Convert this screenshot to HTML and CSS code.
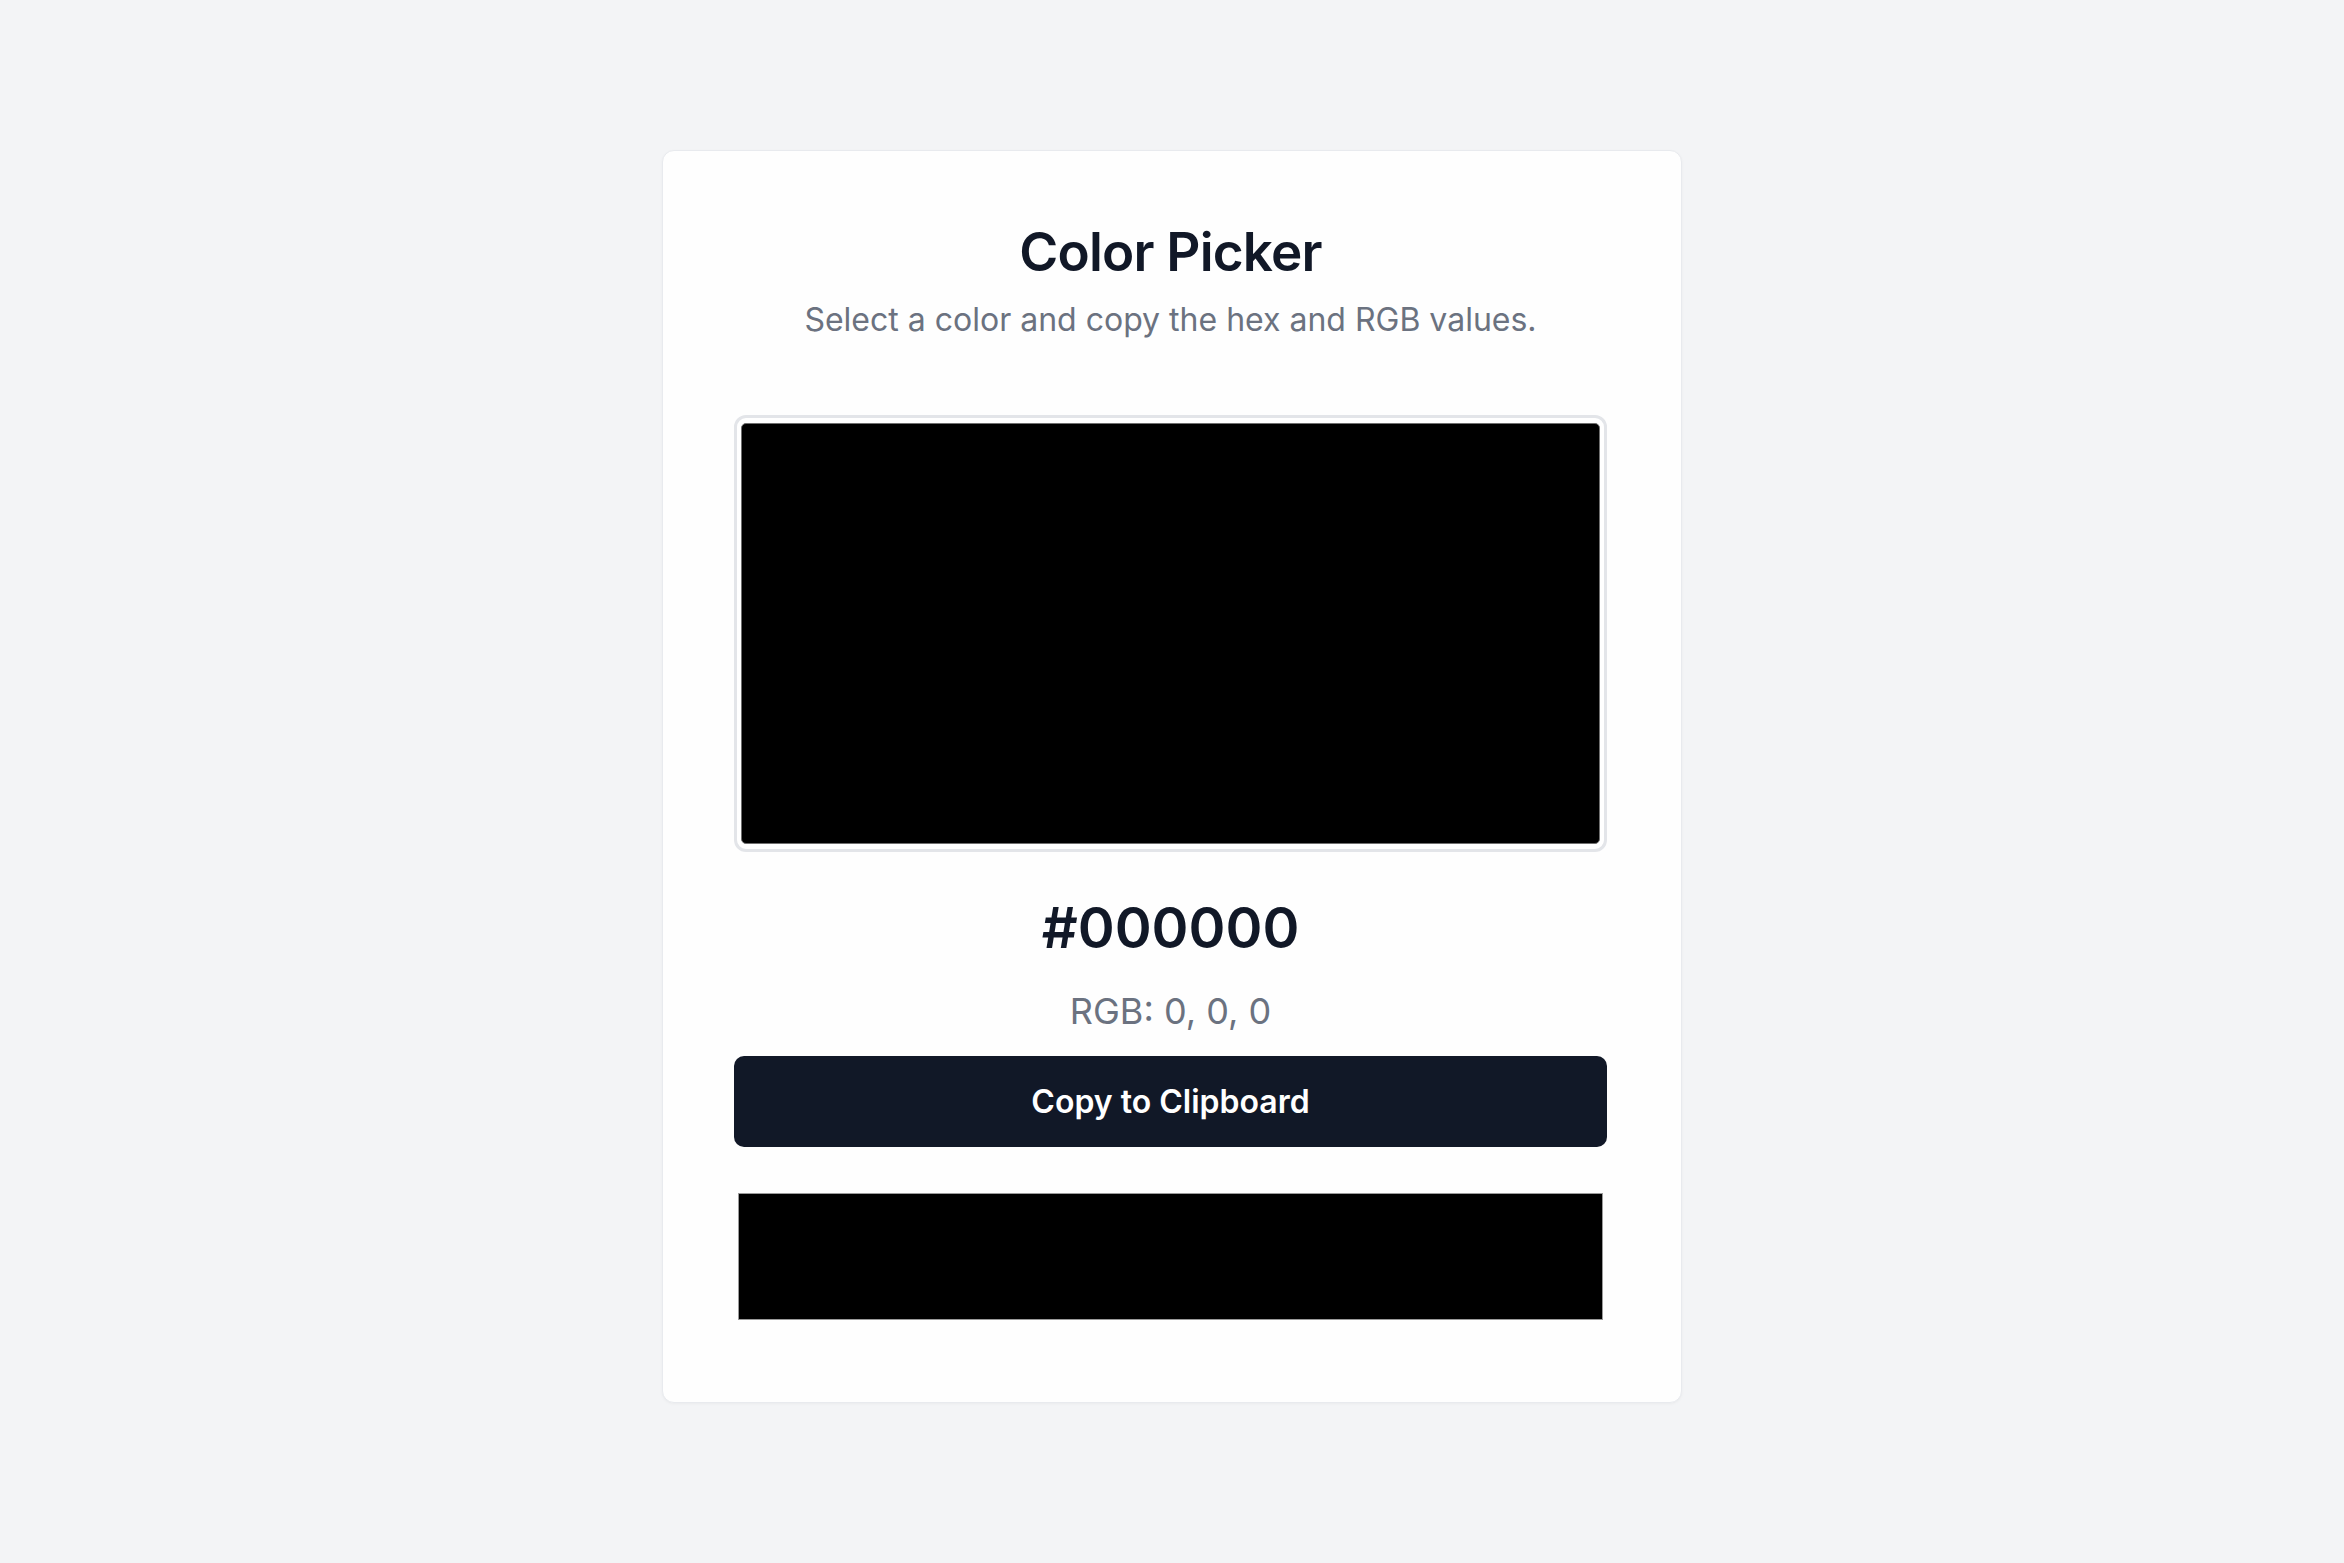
FILE: index.html
```html
<!DOCTYPE html>
<html lang="en">
<head>
<meta charset="utf-8">
<title>Color Picker</title>
<link rel="stylesheet" href="styles.css">
</head>
<body>
<main class="card">
  <h1 class="title">Color Picker</h1>
  <p class="subtitle">Select a color and copy the hex and RGB values.</p>
  <div class="picker">
    <div class="picker-swatch"></div>
  </div>
  <div class="hex">#000000</div>
  <div class="rgb">RGB: 0, 0, 0</div>
  <button class="copy-btn" type="button">Copy to Clipboard</button>
  <div class="preview"></div>
</main>
</body>
</html>
```

FILE: styles.css
```css
* { box-sizing: border-box; }

html, body {
  margin: 0;
  padding: 0;
}

body {
  background: #f3f4f6;
  font-family: Inter, "Noto Sans", "Liberation Sans", sans-serif;
  min-height: 100vh;
  display: flex;
  justify-content: center;
  align-items: flex-start;
  padding-top: 150px;
}

.card {
  width: 1020px;
  background: #fefefe;
  border: 1px solid #e8eaee;
  border-radius: 12px;
  box-shadow: 0 1px 3px rgba(0, 0, 0, 0.04);
  padding: 71px 74px 82px 71px;
  display: flex;
  flex-direction: column;
  align-items: stretch;
  text-align: center;
}

.title {
  margin: 0;
  font-size: 53px;
  line-height: 60px;
  font-weight: 600;
  color: #111827;
  letter-spacing: -0.015em;
}

.subtitle {
  margin: 16px 0 0;
  font-size: 32px;
  line-height: 44px;
  color: #6b7280;
}

.picker {
  margin-top: 73px;
  height: 437px;
  border: 3px solid #e3e5e9;
  border-radius: 12px;
  padding: 5px 4px;
  background: #ffffff;
}

.picker-swatch {
  width: 100%;
  height: 100%;
  background: #000000;
  border: 1px solid #6f6f6f;
  border-radius: 5px;
}

.hex {
  margin-top: 44px;
  font-size: 56px;
  line-height: 65px;
  font-weight: 600;
  color: #111827;
}

.rgb {
  margin-top: 26px;
  font-size: 36px;
  line-height: 49px;
  color: #6b7280;
}

.copy-btn {
  margin-top: 20px;
  height: 91px;
  border: none;
  border-radius: 10px;
  background: #111827;
  color: #ffffff;
  font-family: inherit;
  font-size: 32px;
  font-weight: 600;
  cursor: pointer;
}

.preview {
  margin: 46px 4px 0;
  height: 127px;
  background: #000000;
  border: 1px solid #9a9a9a;
}
```
